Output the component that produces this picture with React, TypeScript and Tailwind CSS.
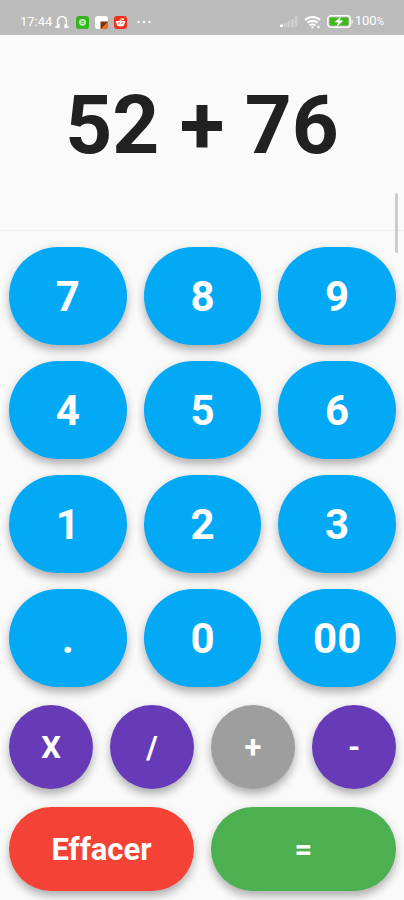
import React, { useState } from 'react';
import clsx from 'clsx';

const digitKeys = ['7', '8', '9', '4', '5', '6', '1', '2', '3', '.', '0', '00'];

const operators = [
  { symbol: 'X', label: 'Multiplier' },
  { symbol: '/', label: 'Diviser' },
  { symbol: '+', label: 'Additionner' },
  { symbol: '-', label: 'Soustraire' },
];

const keyStyle =
  'rounded-full font-bold text-white shadow-[0_6px_10px_-1px_rgba(0,0,0,0.26),0_2px_12px_rgba(0,0,0,0.1)]';

function compute(left: string, operator: string, right: string) {
  const a = Number(left);
  const b = Number(right);
  if (operator === '+') return a + b;
  if (operator === '-') return a - b;
  if (operator === 'X') return a * b;
  return a / b;
}

function HeadphonesIcon() {
  return (
    <svg viewBox="0 0 16 16" className="h-4 w-4" fill="none" stroke="white" strokeWidth="1.5" strokeLinecap="round">
      <path d="M3.6 12V7.4a4.4 5 0 0 1 8.8 0V12" />
      <path d="M1.6 13h3.2M4.8 10.6v3M11.2 10.6v3M11.2 13h3.2" strokeWidth="1.6" />
    </svg>
  );
}

function ChatIcon() {
  return (
    <svg viewBox="0 0 13 13" className="h-[13px] w-[13px]">
      <rect width="13" height="13" rx="3" fill="#35b51f" />
      <circle cx="6.5" cy="6.3" r="3.4" fill="#c9f0c0" />
      <path d="M4.8 5.4h3.4M4.8 7.2h3.4" stroke="#35b51f" strokeWidth="0.9" />
    </svg>
  );
}

function NotesIcon() {
  return (
    <svg viewBox="0 0 13 13" className="h-[13px] w-[13px]">
      <rect width="13" height="13" rx="3" fill="#fff" />
      <path d="M5.5 5.5H13V10a3 3 0 0 1-3 3H5.5z" fill="#7a3412" />
      <path d="M13 5.5V10a3 3 0 0 1-3 3H6z" fill="#f0701c" />
    </svg>
  );
}

function RedditIcon() {
  return (
    <svg viewBox="0 0 13 13" className="h-[13px] w-[13px]">
      <rect width="13" height="13" rx="3" fill="#f0321c" />
      <ellipse cx="6.5" cy="7.5" rx="4" ry="2.9" fill="#fff" />
      <circle cx="2.8" cy="6" r="1.1" fill="#fff" />
      <circle cx="10.2" cy="6" r="1.1" fill="#fff" />
      <path d="M6.5 5l.7-2.3 2 .5" fill="none" stroke="#fff" strokeWidth="0.8" />
      <circle cx="9.2" cy="3.2" r="0.9" fill="#fff" />
      <circle cx="5" cy="7" r="0.8" fill="#f0321c" />
      <circle cx="8" cy="7" r="0.8" fill="#f0321c" />
    </svg>
  );
}

function SignalIcon() {
  return (
    <svg viewBox="0 0 18 13" className="h-[13px] w-[18px]" fill="#fff">
      <rect x="0" y="9.5" width="3" height="2.5" rx="0.5" />
      <g opacity="0.3">
        <rect x="4" y="8" width="2.6" height="4" />
        <rect x="7.6" y="6" width="2.6" height="6" />
        <rect x="11.2" y="4" width="2.6" height="8" />
        <rect x="14.8" y="1.5" width="2.6" height="10.5" />
      </g>
    </svg>
  );
}

function WifiIcon() {
  return (
    <svg viewBox="0 0 17 14" className="h-3.5 w-[17px]" fill="none" stroke="#fff" strokeWidth="2.1">
      <path d="M1 5a11 11 0 0 1 15 0" />
      <path d="M3.4 7.8a7.6 7.6 0 0 1 10.2 0" />
      <path d="M5.7 10.5a4.2 4.2 0 0 1 5.6 0" />
      <circle cx="8.5" cy="12.4" r="1.1" fill="#fff" stroke="none" />
      <path d="M12.8 12h3.2M14.4 10.4v3.2" strokeWidth="1.2" />
    </svg>
  );
}

function BatteryIcon() {
  return (
    <svg viewBox="0 0 27 13" className="h-[13px] w-[27px]">
      <rect x="0.8" y="0.8" width="22.4" height="11.4" rx="3" fill="none" stroke="#fff" strokeWidth="1.4" />
      <rect x="2.6" y="2.6" width="18.8" height="7.8" rx="1" fill="#3fba1a" />
      <path d="M24.6 4.2c1.6.4 1.6 4.2 0 4.6z" fill="#fff" />
      <path d="M13.8 1.2L7.6 7.2h3.4l-1.2 4.6 6.6-6.2h-3.6z" fill="#fff" />
    </svg>
  );
}

function StatusBar() {
  return (
    <header className="flex h-[35px] items-end justify-between bg-[#bbbbbb] px-5 pb-[5px] text-white">
      <div className="flex items-center">
        <span className="text-[13px] leading-4">17:44</span>
        <div className="ml-0.5 flex items-center gap-1.5">
          <HeadphonesIcon />
          <ChatIcon />
          <NotesIcon />
          <RedditIcon />
        </div>
        <svg viewBox="0 0 14 4" className="ml-2.5 h-1 w-3.5" fill="#fff">
          <circle cx="1.5" cy="2" r="1.2" />
          <circle cx="7" cy="2" r="1.2" />
          <circle cx="12.5" cy="2" r="1.2" />
        </svg>
      </div>
      <div className="flex items-center">
        <SignalIcon />
        <span className="ml-1.5 flex items-center gap-1.5">
          <WifiIcon />
          <BatteryIcon />
        </span>
        <span className="ml-px text-[13px] leading-4">
          100<span className="text-[10px]">%</span>
        </span>
      </div>
    </header>
  );
}

export default function App() {
  const [left, setLeft] = useState('52');
  const [operator, setOperator] = useState('+');
  const [right, setRight] = useState('76');

  const handleDigit = (digit: string) => {
    if (operator) setRight(right + digit);
    else setLeft(left + digit);
  };

  const handleClear = () => {
    setLeft('');
    setOperator('');
    setRight('');
  };

  const handleEquals = () => {
    if (!operator || !right) return;
    setLeft(String(compute(left, operator, right)));
    setOperator('');
    setRight('');
  };

  return (
    <div className="min-h-screen bg-[#fafafa] font-[Roboto,sans-serif]">
      <StatusBar />

      <main>
        <section className="relative flex h-[196px] justify-center border-b border-[#f0f0f0] pt-[42px]">
          <output className="text-[82px] leading-[96px] font-bold text-[#212121]">
            {[left, operator, right].filter(Boolean).join(' ') || '0'}
          </output>
          {/* scroll thumb, overlaps the keypad */}
          <div className="absolute top-[158px] right-1.5 h-[60px] w-[3px] rounded-sm bg-[#cccccc]" />
        </section>

        <section className="flex flex-col gap-[18px] pt-4 pr-2 pb-2 pl-[9px]">
          <div className="grid grid-cols-3 gap-x-[17px] gap-y-4">
            {digitKeys.map((digit) => (
              <button
                key={digit}
                type="button"
                onClick={() => handleDigit(digit)}
                className={clsx(keyStyle, 'h-[98px] bg-[#03a9f4] text-[42px]')}
              >
                {digit}
              </button>
            ))}
          </div>

          <div className="grid grid-cols-4 gap-[17px]">
            {operators.map(({ symbol, label }) => (
              <button
                key={symbol}
                type="button"
                aria-label={label}
                onClick={() => setOperator(symbol)}
                className={clsx(
                  keyStyle,
                  'h-[84px] pt-0.5 text-[31px]',
                  operator === symbol ? 'bg-[#9e9e9e]' : 'bg-[#673ab7]'
                )}
              >
                {symbol}
              </button>
            ))}
          </div>

          <div className="grid grid-cols-2 gap-[17px]">
            <button
              type="button"
              onClick={handleClear}
              className={clsx(keyStyle, 'h-[84px] bg-[#f44336] pt-0.5 text-[31px]')}
            >
              Effacer
            </button>
            <button
              type="button"
              aria-label="Égal"
              onClick={handleEquals}
              className={clsx(keyStyle, 'h-[84px] bg-[#4caf50] pt-0.5 text-[31px]')}
            >
              =
            </button>
          </div>
        </section>
      </main>
    </div>
  );
}
